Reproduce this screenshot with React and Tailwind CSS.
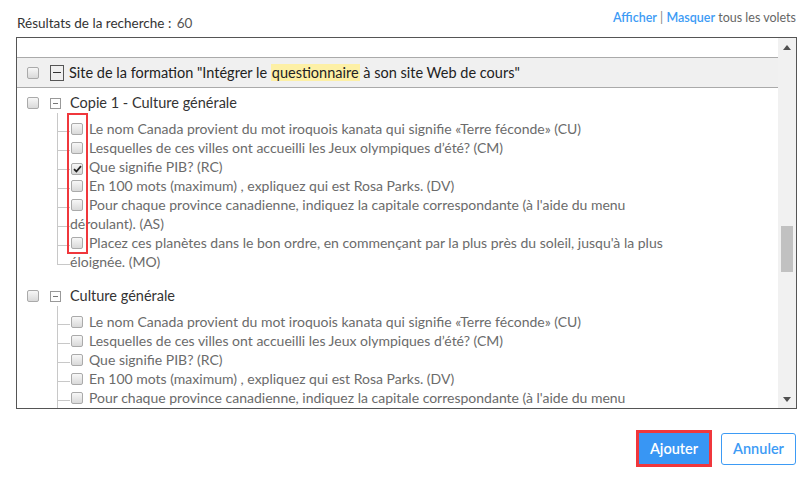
import React from 'react'

const group1 = [
  { text: 'Le nom Canada provient du mot iroquois kanata qui signifie «Terre féconde» (CU)' },
  { text: 'Lesquelles de ces villes ont accueilli les Jeux olympiques d’été? (CM)' },
  { text: 'Que signifie PIB? (RC)', checked: true },
  { text: 'En 100 mots (maximum) , expliquez qui est Rosa Parks. (DV)' },
  { text: "Pour chaque province canadienne, indiquez la capitale correspondante (à l'aide du menu déroulant). (AS)" },
  { text: "Placez ces planètes dans le bon ordre, en commençant par la plus près du soleil, jusqu'à la plus éloignée. (MO)" },
]

const group2 = [
  { text: 'Le nom Canada provient du mot iroquois kanata qui signifie «Terre féconde» (CU)' },
  { text: 'Lesquelles de ces villes ont accueilli les Jeux olympiques d’été? (CM)' },
  { text: 'Que signifie PIB? (RC)' },
  { text: 'En 100 mots (maximum) , expliquez qui est Rosa Parks. (DV)' },
  { text: "Pour chaque province canadienne, indiquez la capitale correspondante (à l'aide du menu déroulant). (AS)" },
  { text: "Placez ces planètes dans le bon ordre, en commençant par la plus près du soleil, jusqu'à la plus éloignée. (MO)" },
]

function CheckBox({ checked, className = '' }) {
  return (
    <span
      className={
        'inline-flex w-[12px] h-[12px] shrink-0 items-center justify-center rounded-[2px] border border-[#aaaaaa] bg-gradient-to-b from-[#f7f7f7] to-[#d9d9d9] align-[-1px] ' +
        className
      }
    >
      {checked && (
        <svg width="9" height="8" viewBox="0 0 9 8">
          <path d="M1 4.2 L3.4 6.5 L8 1.2" fill="none" stroke="#222" strokeWidth="1.8" />
        </svg>
      )}
    </span>
  )
}

function Tree({ items, last, marked }) {
  return (
    <div className="relative flex ml-[40px]">
      <div className="w-[13px] shrink-0 flex flex-col">
        <div
          className={
            'flex-1 border-l border-[#c8c8c8] bg-[linear-gradient(to_bottom,transparent_12px,#c8c8c8_12px,#c8c8c8_13px,transparent_13px)] bg-[length:13px_19px] bg-repeat-y bg-[position:0_6px] ' +
            (last ? 'mb-[6px]' : '')
          }
        />
      </div>
      <div className="pt-[6px] w-[600px]">
        {items.map((it, i) => (
          <div key={i} className="leading-[19px] text-[14px] text-[#6b6b6b]">
            <CheckBox checked={it.checked} className="ml-[1px] mr-[6px]" />
            {it.text}
          </div>
        ))}
      </div>
      {/* annotation box around the checkboxes */}
      {marked && (
        <div className="absolute left-[10px] top-0 w-[21px] h-[141px] border-[2.5px] border-[#f0373c] pointer-events-none" />
      )}
    </div>
  )
}

function GroupTitle({ label }) {
  return (
    <div className="flex items-center h-[20px]">
      <CheckBox className="ml-[10px]" />
      <span className="ml-[11px] w-[11px] h-[11px] border border-[#999] flex items-center justify-center">
        <span className="w-[5px] h-px bg-[#777]" />
      </span>
      <span className="ml-[9px] text-[14.5px] text-[#333]">{label}</span>
    </div>
  )
}

export default function App() {
  return (
    <div className="w-[810px] h-[482px] bg-white font-['Lato','Liberation_Sans',sans-serif] overflow-hidden">
      {/* header */}
      <div className="flex items-end justify-between pl-[17px] pr-[14px] pt-[13px] h-[37px] pb-[4px]">
        <div className="text-[13.5px] text-[#333]">
          Résultats de la recherche : <span className="ml-[2px] text-[#555]">60</span>
        </div>
        <div className="text-[12.5px] text-[#666] pb-[5px]">
          <span className="text-[#3d9bf5] font-semibold">Afficher</span>
          <span className="text-[#888]"> | </span>
          <span className="text-[#3d9bf5] font-semibold">Masquer</span> tous les volets
        </div>
      </div>

      {/* results box */}
      <div className="ml-[16px] w-[781px] h-[372px] border border-[#555] flex">
        <div className="flex-1 overflow-hidden pt-[19px]">
          <div className="h-[31px] border-y border-[#aaa] bg-[#f0f0f0] flex items-center">
            <CheckBox className="ml-[10px]" />
            <span className="ml-[11px] w-[14px] h-[16px] border border-[#555] flex items-center justify-center">
              <span className="w-[8px] h-px bg-[#333]" />
            </span>
            <span className="ml-[5px] text-[14.5px] text-[#222]">
              Site de la formation "Intégrer le{' '}
              <span className="bg-[#fdf0a6] px-[1px]">questionnaire</span> à son site Web de cours"
            </span>
          </div>

          <div className="mt-[5px]">
            <GroupTitle label="Copie 1 - Culture générale" />
            <Tree items={group1} last marked />
          </div>

          <div className="mt-[15px]">
            <GroupTitle label="Culture générale" />
            <Tree items={group2} />
          </div>
        </div>

        {/* scrollbar */}
        <div className="w-[18px] shrink-0 bg-[#f1f1f1] flex flex-col items-center">
          <div className="h-[18px] flex items-center justify-center">
            <svg width="8" height="5" viewBox="0 0 8 5">
              <path d="M0 5 L4 0 L8 5 Z" fill="#505050" />
            </svg>
          </div>
          <div className="mt-[170px] w-[12px] h-[46px] bg-[#c1c1c1]" />
          <div className="flex-1" />
          <div className="h-[18px] flex items-center justify-center">
            <svg width="8" height="5" viewBox="0 0 8 5">
              <path d="M0 0 L8 0 L4 5 Z" fill="#505050" />
            </svg>
          </div>
        </div>
      </div>

      {/* footer buttons */}
      <div className="flex justify-end items-center pr-[14px] mt-[21px] gap-[9px]">
        <div className="border-[3px] border-[#f0373c]">
          <div className="w-[70px] h-[31px] flex items-center justify-center bg-[#3896f4] text-white text-[14.5px] font-semibold">
            Ajouter
          </div>
        </div>
        <div className="w-[75px] h-[32px] flex items-center justify-center rounded-[3px] border border-[#3d9bf5] bg-white text-[#3d9bf5] text-[14.5px] font-semibold">
          Annuler
        </div>
      </div>
    </div>
  )
}
